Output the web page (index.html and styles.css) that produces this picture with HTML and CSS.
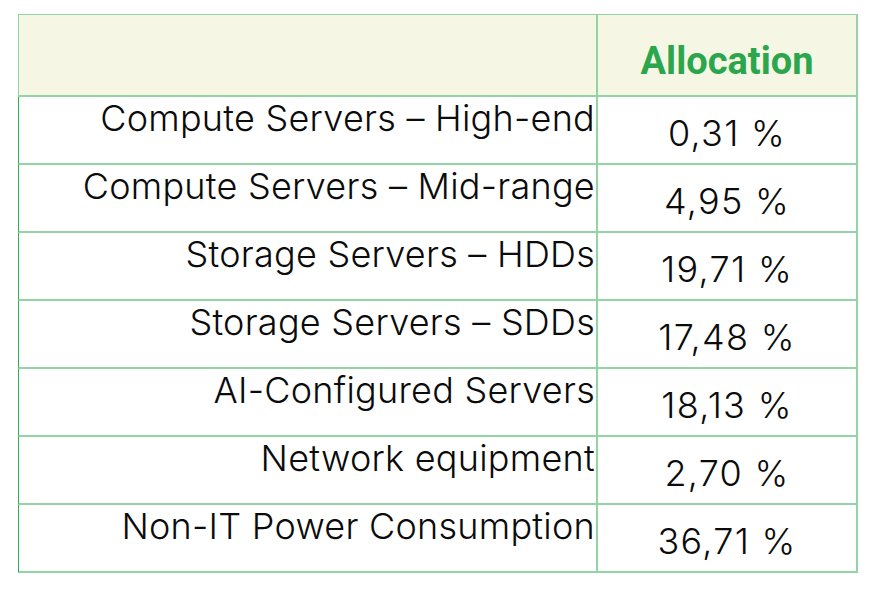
FILE: index.html
```html
<!DOCTYPE html>
<html lang="en">
<head>
<meta charset="utf-8">
<title>Allocation</title>
<link rel="stylesheet" href="styles.css">
</head>
<body>
<table class="alloc">
  <thead>
    <tr>
      <th class="label head-label"></th>
      <th class="value head-value">Allocation</th>
    </tr>
  </thead>
  <tbody>
    <tr><td class="label">Compute Servers – High-end</td><td class="value">0,31 %</td></tr>
    <tr><td class="label">Compute Servers – Mid-range</td><td class="value">4,95 %</td></tr>
    <tr><td class="label">Storage Servers – HDDs</td><td class="value">19,71 %</td></tr>
    <tr><td class="label">Storage Servers – SDDs</td><td class="value">17,48 %</td></tr>
    <tr><td class="label">AI-Configured Servers</td><td class="value">18,13 %</td></tr>
    <tr><td class="label">Network equipment</td><td class="value">2,70 %</td></tr>
    <tr><td class="label">Non-IT Power Consumption</td><td class="value">36,71 %</td></tr>
  </tbody>
</table>
</body>
</html>
```
FILE: styles.css
```css
html, body {
  margin: 0;
  padding: 0;
  background: #ffffff;
}

.alloc {
  margin: 14px 0 0 18px;
  width: 840px;
  table-layout: fixed;
  border-collapse: separate;
  border-spacing: 0;
  font-family: "Inter", "Liberation Sans", sans-serif;
  font-weight: 300;
  color: #0b0b0b;
}

.alloc th,
.alloc td {
  box-sizing: border-box;
  padding: 0;
  border-bottom: 2px solid #92d4a4;
  vertical-align: top;
}

.alloc .label {
  width: 580px;
  border-left: 1px solid #2eb050;
  border-right: 2px solid #92d4a4;
  text-align: right;
  font-size: 36px;
  line-height: 36px;
  letter-spacing: 0.25px;
  padding: 3px 1px 0 0;
}

.alloc .value {
  width: 260px;
  border-right: 2px solid #92d4a4;
  text-align: center;
  font-size: 36px;
  line-height: 36px;
  letter-spacing: 1.3px;
  padding-top: 18px;
}

.alloc tbody td {
  height: 68px;
}

.alloc thead th {
  height: 83px;
  background: #f5f7e4;
  border-top: 1px solid #92d4a4;
}

.alloc .head-label {
  border-left-color: #92d4a4;
}

.alloc .head-value {
  font-family: "Roboto", "Liberation Sans", sans-serif;
  font-weight: 700;
  font-size: 38px;
  line-height: 38px;
  letter-spacing: 0;
  color: #2ba64c;
  padding-top: 27px;
}
```
